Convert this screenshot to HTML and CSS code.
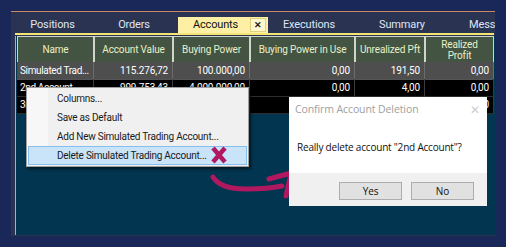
FILE: index.html
```
<!DOCTYPE html>
<html>
<head>
<meta charset="utf-8">
<link rel="stylesheet" href="styles.css">
</head>
<body>
<div class="window">
  <div class="tabs">
    <div class="tab t-pos">Positions</div>
    <div class="tab t-ord">Orders</div>
    <div class="tab t-acc active"><span class="tab-label">Accounts</span><span class="tab-close">✕</span></div>
    <div class="tab t-exe">Executions</div>
    <div class="tab t-sum">Summary</div>
    <div class="tab t-msg">Messages</div>
  </div>
  <div class="tabline"></div>
  <div class="content">
    <div class="grid">
      <div class="hrow">
        <div class="hc">Name</div>
        <div class="hc">Account Value</div>
        <div class="hc">Buying Power</div>
        <div class="hc">Buying Power in Use</div>
        <div class="hc">Unrealized Pft</div>
        <div class="hc">Realized<br>Profit</div>
      </div>
      <div class="row sel">
        <div class="c name">Simulated Trad...</div>
        <div class="c">115.276,72</div>
        <div class="c">100.000,00</div>
        <div class="c">0,00</div>
        <div class="c">191,50</div>
        <div class="c">0,00</div>
      </div>
      <div class="row">
        <div class="c name">2nd Account</div>
        <div class="c">999.753,43</div>
        <div class="c">4.000.000,00</div>
        <div class="c">0,00</div>
        <div class="c">4,00</div>
        <div class="c">0,00</div>
      </div>
      <div class="row">
        <div class="c name">3rd Account</div>
        <div class="c">1.000.000,00</div>
        <div class="c">1.000.000,00</div>
        <div class="c">0,00</div>
        <div class="c">0,00</div>
        <div class="c">0,00</div>
      </div>
    </div>
  </div>
</div>

<div class="menu">
  <div class="mi">Columns...</div>
  <div class="mi">Save as Default</div>
  <div class="mi">Add New Simulated Trading Account...</div>
  <div class="mi hl">Delete Simulated Trading Account...</div>
</div>

<svg class="xmark" width="18" height="18" viewBox="0 0 18 18">
  <path d="M3 2 L15 16 M15 2 L3 16" stroke="#b0185f" stroke-width="4.5" stroke-linecap="butt" fill="none"/>
</svg>

<svg class="arrow" width="100" height="40" viewBox="205 165 100 40">
  <path d="M213 177 Q220 189 246 189 Q268 189 282 186" stroke="#b0185f" stroke-width="5" stroke-linecap="round" fill="none"/>
  <path d="M269 179 L291 173 L286 196" stroke="#b0185f" stroke-width="5" stroke-linecap="round" stroke-linejoin="round" fill="none"/>
</svg>

<div class="dialog">
  <div class="dlg-title"><span>Confirm Account Deletion</span><span class="dlg-x">✕</span></div>
  <div class="dlg-msg">Really delete account "2nd Account"?</div>
  <div class="dlg-foot">
    <div class="btn">Yes</div>
    <div class="btn">No</div>
  </div>
</div>
</body>
</html>
```

FILE: styles.css
```
html, body {
  margin: 0;
  padding: 0;
}
body {
  background: #1a2759;
  width: 506px;
  height: 247px;
  overflow: hidden;
  padding: 11px 0 0 11px;
  box-sizing: border-box;
  font-family: Roboto, "Liberation Sans", sans-serif;
  font-size: 10px;
  letter-spacing: -0.15px;
}
.window {
  width: 484px;
  height: 225px;
  box-sizing: border-box;
  border-top: 1px solid #c9895c;
  background: #2a3452;
  display: flex;
  flex-direction: column;
  overflow: hidden;
}
.tabs {
  height: 21px;
  display: flex;
  align-items: flex-end;
  flex: none;
  white-space: nowrap;
}
.tab {
  height: 16px;
  line-height: 16px;
  color: #dfe6f5;
  font-size: 11px;
  text-align: center;
  flex: none;
}
.t-pos { width: 83px; }
.t-ord { width: 84px; padding-right: 4px; box-sizing: border-box; }
.t-acc { width: 90px; }
.t-exe { width: 82px; }
.t-sum { width: 104px; }
.t-msg { width: 60px; text-align: left; padding-left: 15px; }
.tab.active {
  background: #fdf0a4;
  color: #111;
  display: flex;
  align-items: center;
}
.tab-label {
  flex: 1;
  text-align: center;
  padding-left: 4px;
}
.tab-close {
  width: 14px;
  height: 12px;
  line-height: 12px;
  margin: 0 2px 0 1px;
  background: #fff7cf;
  border: 1px solid #e2cf7a;
  font-size: 9px;
  font-weight: bold;
  text-align: center;
  color: #222;
}
.tabline {
  height: 2px;
  background: #f3e572;
  margin: 0 1px 0 4px;
  flex: none;
}
.content {
  flex: 1;
  margin: 1px 0 1px 4px;
  border-left: 1px solid #a4accb;
  background: #02354f;
  padding-left: 1px;
}
.grid {
  width: 477px;
}
.hrow, .row {
  display: grid;
  grid-template-columns: 77px 79px 77px 105px 70px 69px;
}
.hrow {
  height: 26px;
}
.hc {
  background: #435443;
  border: 1px solid #cfd4cc;
  border-bottom: none;
  color: #e9f0c6;
  display: flex;
  align-items: center;
  justify-content: center;
  text-align: center;
  line-height: 11px;
  font-size: 10px;
}
.row {
  height: 17px;
  background: #000;
  color: #fff;
}
.row.sel {
  background: #4e4e4e;
}
.c {
  line-height: 17px;
  text-align: right;
  padding-right: 4px;
  border-right: 1px solid #3c3c3c;
  border-bottom: 1px solid #2e2e2e;
  box-sizing: border-box;
}
.row.sel .c {
  border-right-color: #6c6c6c;
  border-bottom-color: #555;
}
.c.name {
  text-align: left;
  padding-left: 3px;
  padding-right: 0;
  overflow: hidden;
  white-space: nowrap;
  letter-spacing: -0.35px;
}

.menu {
  position: absolute;
  left: 26px;
  top: 87px;
  width: 223px;
  height: 80px;
  box-sizing: border-box;
  background: linear-gradient(to right, #f7f7f7 0 21px, #f0f0f0 21px);
  border: 1px solid #9e9e9e;
  box-shadow: 2px 2px 3px rgba(0, 0, 0, 0.55);
  padding: 1px 1px;
  color: #1a1a1a;
}
.mi {
  height: 19px;
  line-height: 19px;
  padding-left: 29px;
  box-sizing: border-box;
  letter-spacing: -0.25px;
}
.mi.hl {
  background: #c9e3f8;
  border: 1px solid #86bfee;
  line-height: 17px;
  padding-left: 28px;
}

.xmark {
  position: absolute;
  left: 210px;
  top: 146px;
}
.arrow {
  position: absolute;
  left: 205px;
  top: 165px;
}

.dialog {
  position: absolute;
  left: 289px;
  top: 97px;
  width: 198px;
  height: 109px;
  background: #fff;
  display: flex;
  flex-direction: column;
  font-family: "Open Sans", "Noto Sans", sans-serif;
  letter-spacing: -0.1px;
}
.dlg-title {
  height: 24px;
  display: flex;
  align-items: center;
  justify-content: space-between;
  padding: 0 7px 0 6px;
  color: #a0a0a0;
  font-size: 10.5px;
}
.dlg-x {
  color: #cdcdcd;
  font-size: 12px;
}
.dlg-msg {
  flex: 1;
  padding: 19px 0 0 8px;
  color: #111;
  font-size: 10px;
  letter-spacing: -0.2px;
}
.dlg-foot {
  height: 33px;
  background: #f0f0f0;
  display: flex;
  justify-content: flex-end;
  align-items: flex-start;
  gap: 9px;
  padding: 9px 13px 0 0;
  box-sizing: border-box;
}
.btn {
  width: 63px;
  height: 18px;
  box-sizing: border-box;
  background: #e1e1e1;
  border: 1px solid #adadad;
  text-align: center;
  line-height: 16px;
  color: #111;
  font-size: 10px;
}
```
